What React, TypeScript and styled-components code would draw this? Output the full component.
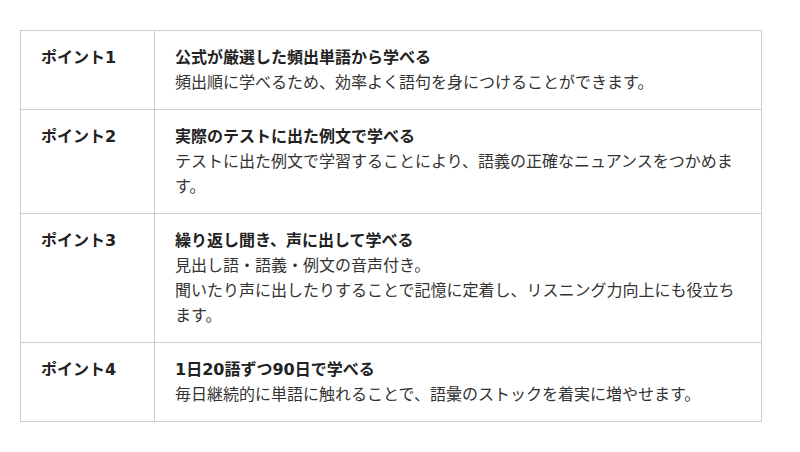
import styled, { createGlobalStyle } from 'styled-components';

const GlobalStyle = createGlobalStyle`
  body {
    margin: 0;
    background: #fff;
    font-family: "DejaVu Sans", "Noto Sans CJK JP", sans-serif;
    color: #333;
  }
`;

const Page = styled.div`
  padding: 30px 0 0 20px;
`;

const Table = styled.div`
  width: 742px;
  box-sizing: border-box;
  border: 1px solid #ccc;
`;

const Row = styled.div<{ $first?: boolean }>`
  display: grid;
  grid-template-columns: 134px 1fr;
  border-top: ${(p) => (p.$first ? 'none' : '1px solid #ccc')};
`;

const Label = styled.div`
  box-sizing: border-box;
  border-right: 1px solid #ccc;
  padding: 14px 20px;
  font-size: 16px;
  line-height: 25px;
  font-weight: bold;
  color: #222;
`;

const Body = styled.div`
  padding: 14px 20px;
  font-size: 16px;
  line-height: 25px;
`;

const Title = styled.div`
  font-weight: bold;
  color: #222;
`;

const Text = styled.div``;

const points = [
  {
    title: '公式が厳選した頻出単語から学べる',
    lines: ['頻出順に学べるため、効率よく語句を身につけることができます。'],
  },
  {
    title: '実際のテストに出た例文で学べる',
    lines: ['テストに出た例文で学習することにより、語義の正確なニュアンスをつかめます。'],
  },
  {
    title: '繰り返し聞き、声に出して学べる',
    lines: [
      '見出し語・語義・例文の音声付き。',
      '聞いたり声に出したりすることで記憶に定着し、リスニング力向上にも役立ちます。',
    ],
  },
  {
    title: '1日20語ずつ90日で学べる',
    lines: ['毎日継続的に単語に触れることで、語彙のストックを着実に増やせます。'],
  },
];

const App = () => {
  return (
    <Page>
      <GlobalStyle />
      <Table>
        {points.map((point, i) => (
          <Row key={i} $first={i === 0}>
            <Label>ポイント{i + 1}</Label>
            <Body>
              <Title>{point.title}</Title>
              {point.lines.map((line) => (
                <Text key={line}>{line}</Text>
              ))}
            </Body>
          </Row>
        ))}
      </Table>
    </Page>
  );
};

export default App;
